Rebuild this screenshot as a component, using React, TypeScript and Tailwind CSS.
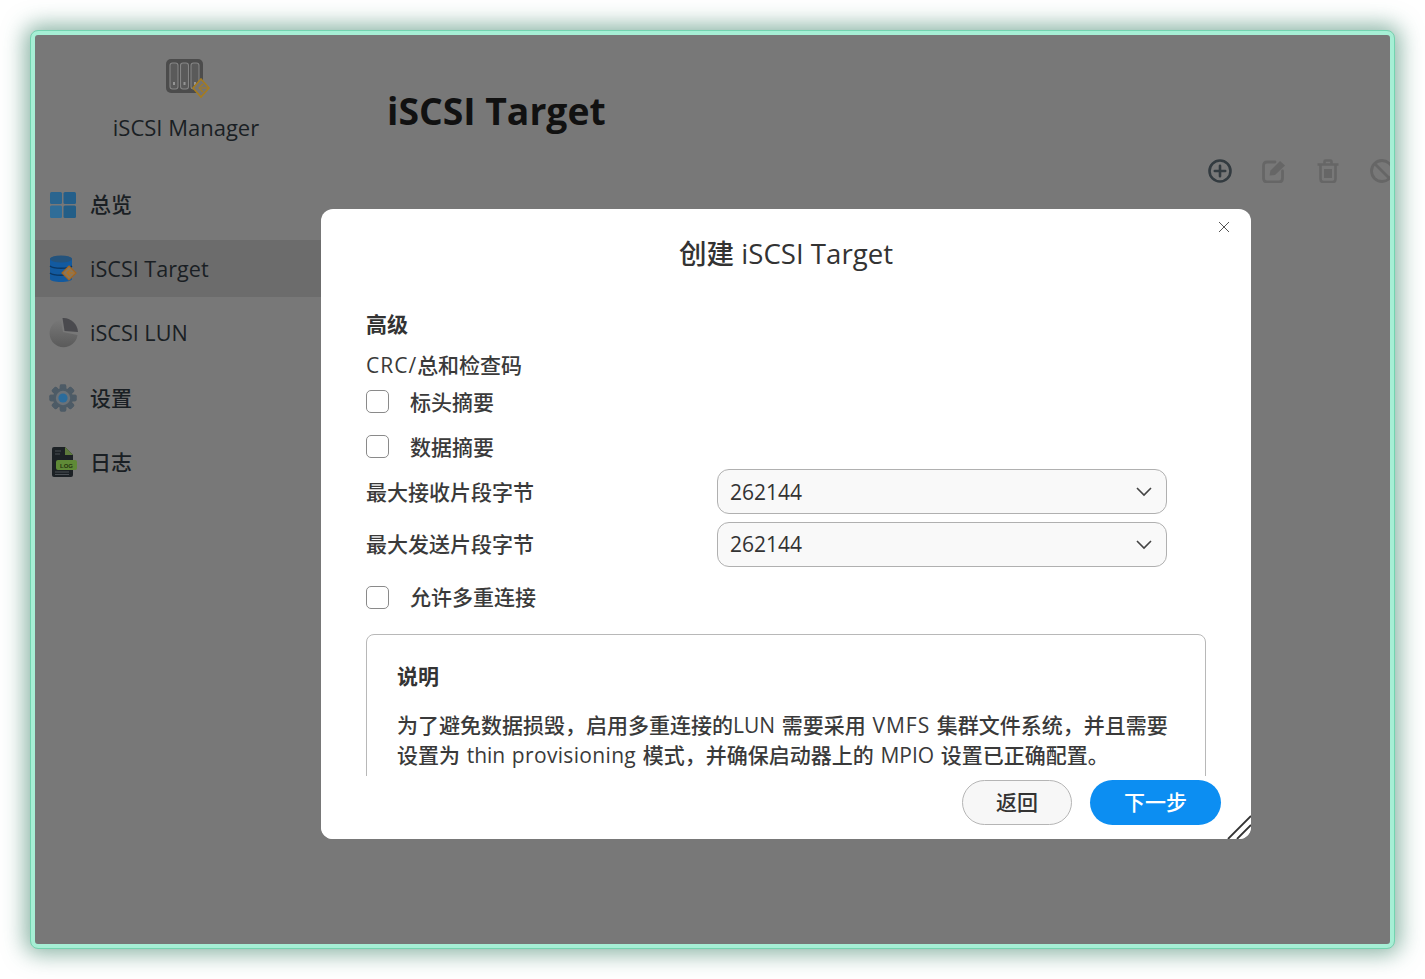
import React from "react";

const font = { fontFamily: '"Open Sans","Noto Sans CJK SC",sans-serif' };

function ServerLogo() {
  return (
    <svg width="44" height="40" viewBox="0 0 44 40">
      <rect x="0" y="0" width="37" height="34" rx="5" fill="#4c4c4c" />
      {[4, 14.5, 25].map((x) => (
        <g key={x}>
          <rect x={x} y="4" width="8" height="26" rx="2.5" fill="#5a5a5a" stroke="#858585" strokeWidth="1.1" />
          <rect x={x + 3} y="23" width="2" height="3" fill="#949494" />
        </g>
      ))}
      <path d="M35 20 L43 29 L35 38 L27 29 Z" fill="#747372" stroke="#a67c1e" strokeWidth="1.6" />
      <path d="M37 25 L33 29 L37 33 M35 29 H42" fill="none" stroke="#a67c1e" strokeWidth="1.2" />
    </svg>
  );
}

function GridIcon() {
  return (
    <svg width="26" height="26" viewBox="0 0 26 26">
      <rect x="0" y="0" width="12" height="12" rx="1.5" fill="#2a658f" />
      <rect x="13.5" y="0" width="12.5" height="12" rx="1.5" fill="#245f8a" />
      <rect x="0" y="13.5" width="12" height="12.5" rx="1.5" fill="#2f6d98" />
      <rect x="13.5" y="13.5" width="12.5" height="12.5" rx="1.5" fill="#235e87" />
    </svg>
  );
}

function DbIcon() {
  return (
    <svg width="28" height="28" viewBox="0 0 28 28">
      <path d="M1 4 C1 0 23 0 23 4 V24 C23 28 1 28 1 24 Z" fill="#125aa0" />
      <ellipse cx="12" cy="4" rx="11" ry="3.5" fill="#24537c" />
      <path d="M1 11 C4 14 20 14 23 11 M1 18 C4 21 20 21 23 18" stroke="#0a3763" strokeWidth="1.4" fill="none" />
      <path d="M20 11 L27 18 L20 25 L13 18 Z" fill="#8a7658" stroke="#a5641d" strokeWidth="1.2" />
      <path d="M21 15 L18 18 L21 21 M19 18 H25" stroke="#b5701c" strokeWidth="1.2" fill="none" />
    </svg>
  );
}

function PieIcon() {
  return (
    <svg width="30" height="30" viewBox="0 0 30 30">
      <defs>
        <linearGradient id="pieg" x1="0" y1="0" x2="0" y2="1">
          <stop offset="0" stopColor="#787878" />
          <stop offset="1" stopColor="#5a5a5a" />
        </linearGradient>
      </defs>
      <path d="M13 1.5 A14 14 0 1 0 29.5 17 L15 14 Z" fill="url(#pieg)" />
      <path d="M14.5 0 A15 15 0 0 1 30 14 L16.5 13 Z" fill="#4a4a4e" />
    </svg>
  );
}

function GearIcon() {
  return (
    <svg width="28" height="28" viewBox="0 0 28 28">
      <g fill="#4d5b66">
        {[0, 45, 90, 135, 180, 225, 270, 315].map((a) => (
          <rect key={a} x="10.8" y="0.5" width="6.4" height="27" rx="1.4" transform={`rotate(${a} 14 14)`} />
        ))}
      </g>
      <circle cx="14" cy="14" r="10" fill="#4d5b66" />
      <circle cx="14" cy="14" r="7.2" fill="#6b7278" />
      <circle cx="14" cy="14" r="4.6" fill="#2b6c9c" />
    </svg>
  );
}

function LogIcon() {
  return (
    <svg width="28" height="32" viewBox="0 0 28 32">
      <path d="M2 3 Q2 1 4 1 H15 L23 9 V29 Q23 31 21 31 H4 Q2 31 2 29 Z" fill="#1c2125" />
      <path d="M15 1 L23 9 H15 Z" fill="#5d7a3c" />
      <path d="M5 5 H11 M5 8 H10 M5 26 H19 M5 28.5 H19" stroke="#4b5055" strokeWidth="1" />
      <rect x="6" y="14" width="21" height="10" rx="2" fill="#5f8a37" />
      <text x="16.5" y="21.5" fontSize="6" fontWeight="700" textAnchor="middle" fill="#23330f" fontFamily="Liberation Sans">
        LOG
      </text>
    </svg>
  );
}

function ToolbarIcons() {
  return (
    <div className="flex items-center gap-[30px] pl-[1173px] h-6">
      <svg width="24" height="24" viewBox="0 0 24 24" fill="none" stroke="#333b40" strokeWidth="2.6" className="shrink-0">
        <circle cx="12" cy="12" r="10.5" />
        <path d="M12 6.8V17.2M6.8 12H17.2" strokeLinecap="round" />
      </svg>
      <svg width="24" height="24" viewBox="0 0 24 24" fill="none" stroke="#666666" strokeWidth="2.8" className="shrink-0">
        <path d="M20.5 12V19 Q20.5 23 17 23 H5 Q1.5 23 1.5 19 V7 Q1.5 3 5 3 H13" strokeLinecap="round" />
        <path d="M7.5 16.5 L8.5 11.5 L18 2 L23 6.5 L13 16 Z" fill="#666666" stroke="none" />
      </svg>
      <svg width="24" height="24" viewBox="0 0 24 24" fill="none" stroke="#666666" strokeWidth="2.6" className="shrink-0">
        <path d="M1.5 5.5H22.5M8.5 5V2.5Q8.5 1.5 9.5 1.5H14.5Q15.5 1.5 15.5 2.5V5" />
        <path d="M4.5 6V20Q4.5 23 7.5 23H16.5Q19.5 23 19.5 20V6" />
        <path d="M8 10H16V19H8Z" fill="#666666" stroke="none" />
      </svg>
      <svg width="24" height="24" viewBox="0 0 24 24" fill="none" stroke="#666666" strokeWidth="2.8" className="shrink-0">
        <circle cx="12" cy="12" r="10.5" />
        <path d="M4.5 4.5L19.5 19.5" />
      </svg>
    </div>
  );
}

function NavItem({ icon, label, active, h, size }: { icon: React.ReactNode; label: string; active?: boolean; h: string; size: string }) {
  return (
    <div className={`flex items-center ${h} ${active ? "bg-[#6c6c6c]" : ""}`}>
      <div className="w-[55px] flex justify-center shrink-0">{icon}</div>
      <span className={`${size} font-medium text-[#1a1f24] whitespace-nowrap`}>{label}</span>
    </div>
  );
}

function Check({ label, nudge }: { label: string; nudge?: boolean }) {
  return (
    <div className="flex items-center h-[45px]">
      <span className="w-[23px] h-[23px] rounded-[5px] border border-[#8a8a8a] bg-white shrink-0" />
      <span className={`ml-[21px] text-[21px] font-medium text-[#3a3a3a] ${nudge ? "pt-[2px]" : ""}`}>{label}</span>
    </div>
  );
}

function SelectRow({ label, mb, nudge }: { label: string; mb: string; nudge?: boolean }) {
  return (
    <div className={`flex items-center h-[45px] ${mb}`}>
      <span className={`w-[351px] shrink-0 text-[21px] font-medium text-[#3a3a3a] ${nudge ? "pt-[2px]" : ""}`}>{label}</span>
      <div className="w-[450px] h-[45px] rounded-[12px] border border-[#b0b0b0] bg-[#f9f9f9] flex items-center justify-between pl-3 pr-[12px]">
        <span className={`text-[21px] text-[#333333] ${nudge ? "pt-[2px]" : ""}`}>262144</span>
        <svg width="20" height="12" viewBox="0 0 20 12" fill="none" stroke="#444444" strokeWidth="1.6">
          <path d="M3 2L10 9L17 2" />
        </svg>
      </div>
    </div>
  );
}

export default function App() {
  return (
    <div className="w-[1425px] h-[979px] bg-white pl-[31px] pt-[31px] overflow-hidden" style={font}>
      <div className="relative w-[1363px] h-[917px] rounded-[7px] border-[4px] border-[#a6efd5] bg-[#787878] shadow-[0_0_22px_6px_rgba(60,130,105,0.6)] overflow-hidden outline outline-1 outline-[#74d4b0]">
        <div className="flex h-full">
          {/* Sidebar */}
          <aside className="w-[286px] shrink-0 flex flex-col">
            <div className="flex flex-col items-center pt-[24px] pl-[16px] h-[152px]">
              <div className="ml-[3px]">
                <ServerLogo />
              </div>
              <div className="mt-[13px] text-[22px] leading-[30px] font-medium text-[#1a1f24] whitespace-nowrap">iSCSI Manager</div>
            </div>
            <NavItem h="h-[35px] mb-[18px]" size="text-[21px]" icon={<GridIcon />} label="总览" />
            <NavItem h="h-[57px] mb-[8px] pb-0" size="text-[21.6px] pt-[2px]" active icon={<DbIcon />} label="iSCSI Target" />
            <NavItem h="h-[56px] mb-[9px]" size="text-[21.6px]" icon={<PieIcon />} label="iSCSI LUN" />
            <NavItem h="h-[56px] mb-[8px]" size="text-[21px] pt-[2px]" icon={<GearIcon />} label="设置" />
            <NavItem
              h="h-[56px]"
              size="text-[21px] pt-[2px]"
              icon={
                <div className="ml-[2px]">
                  <LogIcon />
                </div>
              }
              label="日志"
            />
          </aside>
          {/* Main */}
          <main className="flex-1 relative min-w-0">
            <h1 className="mt-[50px] ml-[66px] text-[37.3px] leading-[52px] font-bold text-[#111111] whitespace-nowrap">iSCSI Target</h1>
          </main>
        </div>
        <div className="absolute left-0 top-[124px] w-full overflow-hidden">
          <ToolbarIcons />
        </div>

        {/* Dialog */}
        <div className="absolute left-[286px] top-[174px] w-[930px] h-[630px] bg-white rounded-[12px] flex flex-col overflow-hidden">
          <button className="absolute right-[21px] top-[12px] text-[#555555]">
            <svg width="12" height="12" viewBox="0 0 12 12" fill="none" stroke="#555555" strokeWidth="1">
              <path d="M1 1L11 11M11 1L1 11" />
            </svg>
          </button>
          <div className="text-center text-[27.6px] leading-[38px] font-medium text-[#333333] pt-[25px] h-[89px]">创建 iSCSI Target</div>
          <div className="px-[45px] flex-1 min-h-0 overflow-hidden">
            <div className="text-[21px] leading-[30px] font-bold text-[#333333] mt-[11px]">高级</div>
            <div className="text-[21px] leading-[30px] font-medium text-[#3a3a3a] mt-[11px] -mb-[1px]">
              <span className="tracking-[1px]">CRC/</span>总和检查码
            </div>
            <div className="-mt-[1px]">
              <Check label="标头摘要" nudge />
              <Check label="数据摘要" nudge />
            </div>
            <SelectRow label="最大接收片段字节" mb="mb-[8px]" nudge />
            <SelectRow label="最大发送片段字节" mb="mb-[8px]" />
            <Check label="允许多重连接" />
            <div className="mt-[14px] w-[840px] h-[240px] border border-[#b8b8b8] rounded-[8px] px-[30px] pt-[25px]">
              <div className="text-[21px] leading-[32px] font-bold text-[#333333]">说明</div>
              <div className="mt-[18px] text-[21px] leading-[30px] font-medium text-[#3a3a3a] whitespace-nowrap [word-spacing:1.2px]">
                为了避免数据损毁，启用多重连接的LUN 需要采用 <span className="tracking-[1px]">VMFS</span> 集群文件系统，并且需要
                <br />
                设置为 thin <span className="tracking-[0.33px]">provisioning</span> 模式，并确保启动器上的 MPIO 设置已正确配置。
              </div>
            </div>
          </div>
          <div className="absolute left-0 right-0 bottom-0 h-[63px] bg-white flex justify-end items-start pr-[30px] pt-[4px] gap-[18px]">
            <button className="w-[110px] h-[45px] rounded-full border border-[#b5b5b5] bg-[#f7f7f7] text-[21px] font-medium text-[#333333]">返回</button>
            <button className="w-[131px] h-[45px] rounded-full bg-[#0c8ef2] text-[21px] font-medium text-white">下一步</button>
          </div>
          <svg className="absolute right-0 bottom-0" width="24" height="24" viewBox="0 0 24 24" stroke="#333333" strokeWidth="1.8" fill="none">
            <path d="M1 24L24 1M10 24L24 10" />
          </svg>
        </div>
      </div>
    </div>
  );
}
